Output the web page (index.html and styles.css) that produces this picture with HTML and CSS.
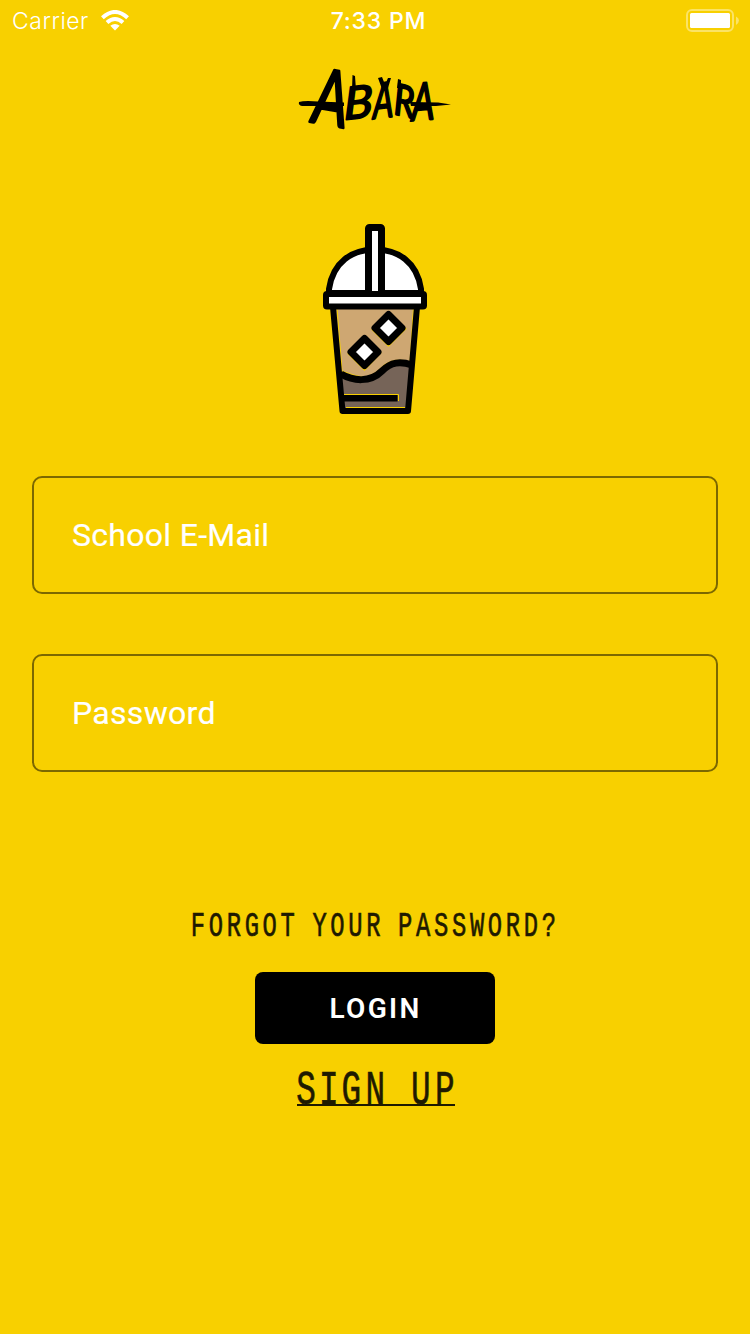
FILE: index.html
```html
<!DOCTYPE html>
<html lang="en">
<head>
<meta charset="utf-8">
<title>Abara</title>
<link rel="stylesheet" href="styles.css">
</head>
<body>
<div class="screen">
  <header class="status">
    <div class="carrier"><span class="carrier-name">Carrier</span>
      <svg class="wifi" width="28" height="21" viewBox="0 0 28 21"><g fill="none" stroke="#fff" stroke-width="4"><path d="M1.4 7.8Q14-3.800 26.600 7.800"/><path d="M6 12.600Q14 5.400 22 12.600"/></g><path d="M9.300 15.800Q14 12 18.700 15.800L14 20.500Z" fill="#fff"/></svg>
    </div>
    <div class="time">7:33 PM</div>
    <svg class="battery" width="54" height="24" viewBox="0 0 54 24"><rect x="1" y="1" width="46" height="21" rx="5" fill="none" stroke="#fff" stroke-opacity=".4" stroke-width="2"/><rect x="4" y="4" width="40" height="15" rx="1.500" fill="#fff"/><path d="M50 7.500Q53 9 53 11.500T50 16Z" fill="#fff" fill-opacity=".4"/></svg>
  </header>
  <main class="content">
    <svg class="logo" width="170" height="120" viewBox="0 -20 170 120" role="img" aria-label="Abara">
      <g class="logo-type">
        <text transform="matrix(.72 .13 -.1 1 21 62)" font-size="77" stroke-width="2.600">A</text>
        <text transform="matrix(.96 -.12 0 .9 54 60)" font-size="50">B</text>
        <text transform="matrix(.66 -.08 0 1 83 59)" font-size="49">A</text>
        <text transform="matrix(.8 .2 0 1 104 54)" font-size="44">R</text>
        <text transform="matrix(.7 -.06 0 1 121.500 61)" font-size="52">A</text>
      </g>
      <path d="M9 42Q14 40.500 28 41.500L54 42.500V46L12 46Q8 45 9 42ZM120 42L148 42.500L161 44.500L146 46L121 46ZM88 18L92 17L96 27L92 29ZM98 18L101 18L98 28L94 27ZM62.500 15L65 16L66 30L62 30ZM108 19L111 20L111 28H107Z"/>
    </svg>
    <svg class="cup" width="120" height="205" viewBox="0 0 120 205">
      <path d="M14 78V74C18 47 37 34.500 60 34.500S102 47 106 74V78Z" fill="#fff" stroke="#000" stroke-width="6"/>
      <rect x="53.500" y="12.500" width="13" height="67.500" rx="1" fill="#fff" stroke="#000" stroke-width="7"/>
      <path d="M18 92H102L93 196H28Z" fill="#cea772"/>
      <path d="M26 159C38 166 55 168 66 156C76 147 85 146 99 150L93 193H28Z" fill="#766458"/>
      <path d="M22 92.500H98.500L95 147Q80 142 69 150C54 165 49 164 27 156Z" fill="none" stroke="#f8d000" stroke-width="1"/>
      <path d="M18 92L27.500 196H93L102 92" fill="none" stroke="#000" stroke-width="6" stroke-linejoin="round"/>
      <path d="M26 159C38 166 55 168 67 156C76 147 85 146 97 150" fill="none" stroke="#000" stroke-width="7"/>
      <path d="M29 179.500H83.500V186M31 192.500H90" fill="none" stroke="#f8d000"/>
      <path d="M29 180H82.500V186.500H29Z"/>
      <rect x="11" y="79" width="98" height="12.500" rx="1" fill="#fff" stroke="#000" stroke-width="6"/>
      <path d="M57 114L73.500 130.500L91 113M33 138L49.500 154.500L66 137" fill="none" stroke="#f8d000" stroke-width="2"/>
      <path d="M73.500 99.500L87 113L73.500 126.500L60 113ZM49.500 123.500L63 137L49.500 150.500L36 137Z" fill="#fff" stroke="#000" stroke-width="7" stroke-linejoin="round"/>
    </svg>
    <form class="form">
      <input class="field" type="email" placeholder="School E-Mail" aria-label="School E-Mail">
      <input class="field" type="password" placeholder="Password" aria-label="Password">
      <a class="forgot"><span class="hand">FORGOT YOUR PASSWORD?</span></a>
      <button class="login" type="button">LOGIN</button>
      <a class="signup"><span class="hand"><span>S</span><span class="slim">I</span><span>GN UP</span></span></a>
    </form>
  </main>
</div>
</body>
</html>
```
FILE: styles.css
```css
* { box-sizing: border-box; }
body { margin: 0; background: #f8d000; }
.screen { width: 750px; height: 1334px; background: #f8d000; overflow: hidden; }
.status { height: 42px; padding: 0 10px 0 12px; display: grid; grid-template-columns: 1fr auto 1fr; align-items: center; color: #fff; font-family: Inter, sans-serif; font-size: 23px; line-height: 42px; }
.carrier { display: flex; align-items: center; gap: 12px; }
.carrier-name { font-weight: 350; letter-spacing: .5px; }
.wifi { margin-top: -2px; }
.time { padding-left: 5px; font-weight: 550; letter-spacing: .8px; }
.battery { justify-self: end; }
.content { display: flex; flex-direction: column; align-items: center; }
.logo { margin-top: -2px; }
.logo-type { font-family: Lato, sans-serif; font-weight: 400; font-style: italic; stroke: #000; stroke-width: 2; stroke-linejoin: round; }
.cup { margin-top: 55px; }
.form { width: 100%; padding: 0 32px; margin-top: 56px; display: flex; flex-direction: column; align-items: center; }
.field { width: 686px; height: 118px; margin-bottom: 60px; padding: 0 38px; border: 2px solid #7c6800; border-radius: 10px; background: transparent; font: 32px Roboto, sans-serif; letter-spacing: .3px; color: #fff; outline: 0; }
.field::placeholder { color: #fff; opacity: 1; -webkit-text-stroke: .2px #fff; }
.forgot, .signup { display: flex; justify-content: center; color: #1f1a00; font-family: "Liberation Mono", monospace; }
.hand { display: block; white-space: nowrap; transform: scaleX(.68); -webkit-text-stroke: .7px #1f1a00; }
.forgot { height: 40px; margin-top: 75px; font-size: 35px; line-height: 40px; }
.forgot .hand { letter-spacing: 5.400px; word-spacing: -6px; }
.login { width: 240px; height: 72px; margin-top: 25px; padding: 0 0 0 1px; border: 0; border-radius: 8px; background: #000; color: #fff; font: 600 28px Roboto, sans-serif; letter-spacing: 2.300px; }
.signup { width: 158px; height: 42px; margin: 20px 0 0 2px; border-bottom: 2px solid #1f1a00; font-size: 48px; line-height: 54px; }
.signup .hand { letter-spacing: 6.500px; word-spacing: -4px; padding-left: 6px; }
.slim { margin: 0 -2px; }
```
